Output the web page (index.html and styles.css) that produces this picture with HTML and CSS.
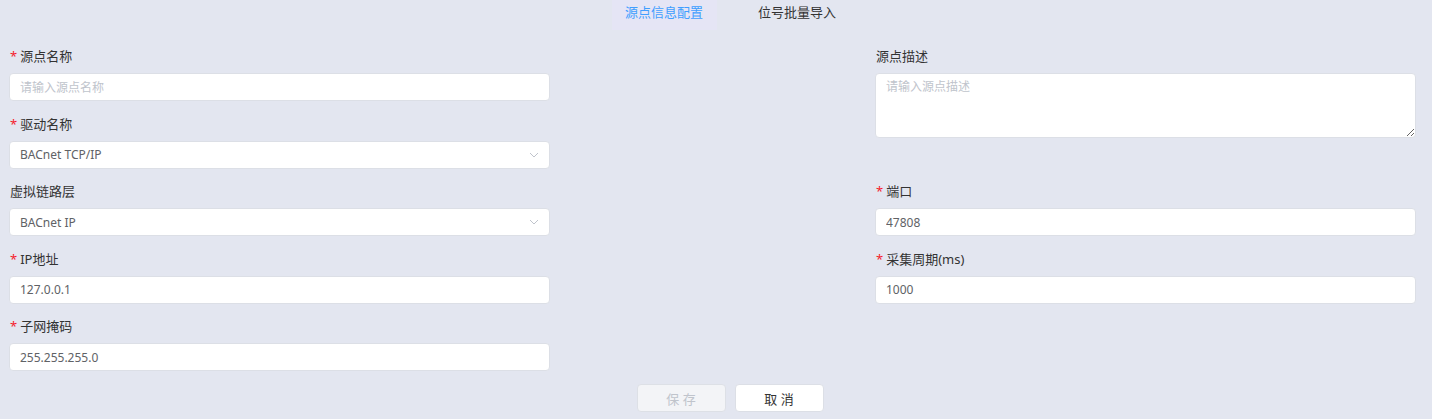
FILE: index.html
```html
<!DOCTYPE html>
<html lang="zh-CN">
<head>
  <meta charset="UTF-8">
  <title>源点信息配置</title>
  <link rel="stylesheet" href="styles.css">
</head>
<body>
  <div class="tabs">
    <div class="tab active">源点信息配置</div>
    <div class="tab">位号批量导入</div>
  </div>

  <form class="source-form">
    <div class="form-item">
      <label class="form-label required">源点名称</label>
      <input class="form-input" type="text" placeholder="请输入源点名称">
    </div>
    <div class="form-item desc-item">
      <label class="form-label">源点描述</label>
      <textarea class="form-textarea" placeholder="请输入源点描述"></textarea>
    </div>

    <div class="form-item">
      <label class="form-label required">驱动名称</label>
      <div class="select">
        <input class="form-input" type="text" value="BACnet TCP/IP" readonly>
        <svg class="select-arrow" width="10" height="6" viewBox="0 0 10 6"><path d="M1 1 L5 5 L9 1" fill="none" stroke="#c0c4cc" stroke-width="1"/></svg>
      </div>
    </div>

    <div class="form-item">
      <label class="form-label">虚拟链路层</label>
      <div class="select">
        <input class="form-input" type="text" value="BACnet IP" readonly>
        <svg class="select-arrow" width="10" height="6" viewBox="0 0 10 6"><path d="M1 1 L5 5 L9 1" fill="none" stroke="#c0c4cc" stroke-width="1"/></svg>
      </div>
    </div>
    <div class="form-item">
      <label class="form-label required">端口</label>
      <input class="form-input" type="text" value="47808">
    </div>

    <div class="form-item">
      <label class="form-label required">IP地址</label>
      <input class="form-input" type="text" value="127.0.0.1">
    </div>
    <div class="form-item">
      <label class="form-label required">采集周期(ms)</label>
      <input class="form-input" type="text" value="1000">
    </div>

    <div class="form-item">
      <label class="form-label required">子网掩码</label>
      <input class="form-input" type="text" value="255.255.255.0">
    </div>
  </form>

  <div class="actions">
    <button class="btn btn-save" disabled>保 存</button>
    <button class="btn btn-cancel">取 消</button>
  </div>
</body>
</html>
```

FILE: styles.css
```css
body {
  margin: 0;
  background: #e3e6f0;
  font-family: "Noto Sans", "Noto Sans CJK SC", sans-serif;
  color: #333;
}

.tabs {
  display: flex;
  justify-content: center;
  gap: 28px;
  height: 30px;
  padding-left: 29px;
}

.tab {
  width: 105px;
  height: 30px;
  line-height: 25px;
  text-align: center;
  font-size: 13px;
  color: #333;
}

.tab.active {
  background: #e5e5f5;
  color: #409eff;
}

.source-form {
  display: grid;
  grid-template-columns: 541px 541px;
  justify-content: space-between;
  row-gap: 13.5px;
  padding: 17px 16px 0 9px;
  margin: 0;
}

.form-item {
  display: flex;
  flex-direction: column;
}

.desc-item {
  grid-row: span 2;
}

.form-label {
  font-size: 13px;
  line-height: 18px;
  margin-bottom: 8px;
  padding-left: 1px;
  color: #333;
}

.form-label.required::before {
  content: "*";
  color: #f5222d;
  margin-right: 3px;
}

.form-input, .form-textarea {
  box-sizing: border-box;
  width: 100%;
  border: 1px solid #dcdfe6;
  border-radius: 4px;
  background: #fff;
  font-family: inherit;
  font-size: 12px;
  color: #606266;
  outline: none;
}

.form-input {
  height: 28px;
  padding: 0 10px;
}

.form-textarea {
  height: 65px;
  padding: 4px 10px;
  line-height: 18px;
  display: block;
}

.form-input::placeholder, .form-textarea::placeholder {
  color: #c0c4cc;
}

.select {
  position: relative;
}

.select-arrow {
  position: absolute;
  right: 11px;
  top: 11px;
}

.actions {
  display: flex;
  justify-content: center;
  gap: 9px;
  padding: 13px 0 0 28px;
}

.btn {
  width: 89px;
  height: 28px;
  border-radius: 4px;
  font-family: inherit;
  font-size: 13px;
  cursor: pointer;
}

.btn-save {
  background: #f3f4f7;
  border: 1px solid #dde0e6;
  color: #c0c4cc;
}

.btn-cancel {
  background: #fff;
  border: 1px solid #dcdfe6;
  color: #333;
}
```
